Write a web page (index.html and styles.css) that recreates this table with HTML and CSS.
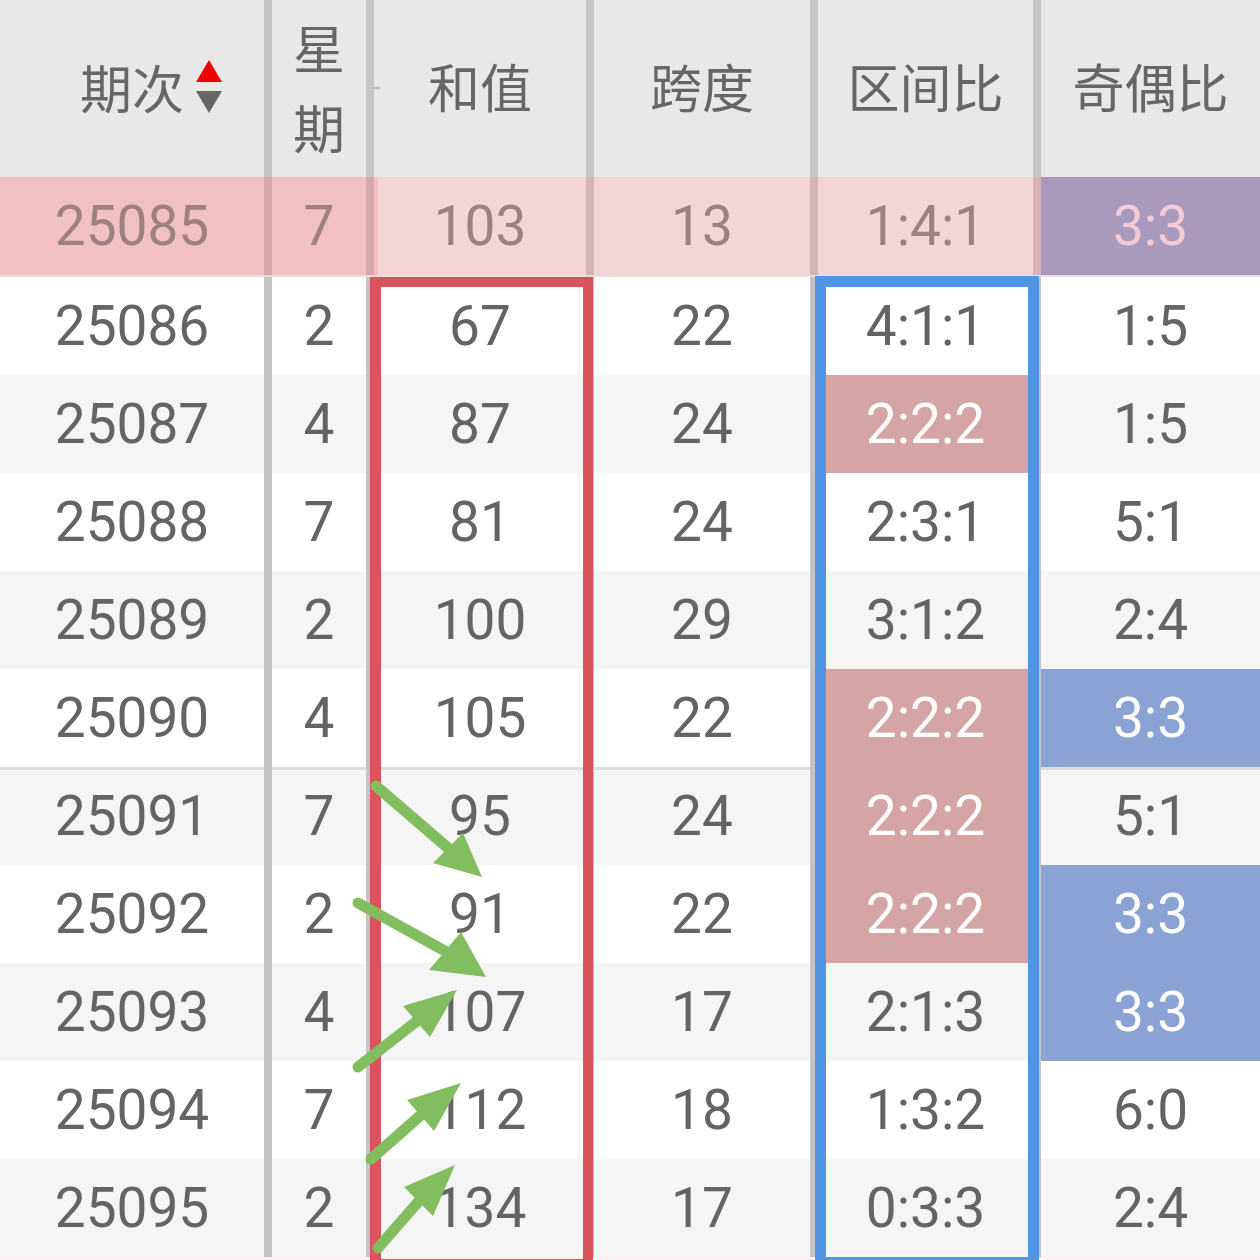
FILE: index.html
```html
<!DOCTYPE html>
<html lang="zh-CN">
<head>
<meta charset="utf-8">
<title>走势</title>
<link rel="stylesheet" href="styles.css">
</head>
<body>
<div class="board">
  <div class="row head">
    <div class="cell c1"><span class="sort-label">期次<svg class="sort" width="26" height="54" viewBox="0 0 26 54"><polygon points="13,0 26,22 0,22" fill="#f00000"/><polygon points="0,31 26,31 13,53" fill="#666"/></svg></span></div>
    <div class="cell c2 vert"><span>星</span><span>期</span></div>
    <div class="cell c3 tick">和值</div>
    <div class="cell c4">跨度</div>
    <div class="cell c5">区间比</div>
    <div class="cell c6">奇偶比</div>
  </div>
  <div class="row latest">
    <div class="cell c1">25085</div>
    <div class="cell c2">7</div>
    <div class="cell c3">103</div>
    <div class="cell c4">13</div>
    <div class="cell c5">1:4:1</div>
    <div class="cell c6">3:3</div>
  </div>
  <div class="row odd">
    <div class="cell c1">25086</div><div class="cell c2">2</div><div class="cell c3">67</div><div class="cell c4">22</div><div class="cell c5">4:1:1</div><div class="cell c6">1:5</div>
  </div>
  <div class="row even">
    <div class="cell c1">25087</div><div class="cell c2">4</div><div class="cell c3">87</div><div class="cell c4">24</div><div class="cell c5 hl-red">2:2:2</div><div class="cell c6">1:5</div>
  </div>
  <div class="row odd">
    <div class="cell c1">25088</div><div class="cell c2">7</div><div class="cell c3">81</div><div class="cell c4">24</div><div class="cell c5">2:3:1</div><div class="cell c6">5:1</div>
  </div>
  <div class="row even">
    <div class="cell c1">25089</div><div class="cell c2">2</div><div class="cell c3">100</div><div class="cell c4">29</div><div class="cell c5">3:1:2</div><div class="cell c6">2:4</div>
  </div>
  <div class="row odd">
    <div class="cell c1">25090</div><div class="cell c2">4</div><div class="cell c3">105</div><div class="cell c4">22</div><div class="cell c5 hl-red">2:2:2</div><div class="cell c6 hl-blue">3:3</div>
  </div>
  <div class="row even sep">
    <div class="cell c1">25091</div><div class="cell c2">7</div><div class="cell c3">95</div><div class="cell c4">24</div><div class="cell c5 hl-red">2:2:2</div><div class="cell c6">5:1</div>
  </div>
  <div class="row odd">
    <div class="cell c1">25092</div><div class="cell c2">2</div><div class="cell c3">91</div><div class="cell c4">22</div><div class="cell c5 hl-red">2:2:2</div><div class="cell c6 hl-blue">3:3</div>
  </div>
  <div class="row even">
    <div class="cell c1">25093</div><div class="cell c2">4</div><div class="cell c3">107</div><div class="cell c4">17</div><div class="cell c5">2:1:3</div><div class="cell c6 hl-blue">3:3</div>
  </div>
  <div class="row odd">
    <div class="cell c1">25094</div><div class="cell c2">7</div><div class="cell c3">112</div><div class="cell c4">18</div><div class="cell c5">1:3:2</div><div class="cell c6">6:0</div>
  </div>
  <div class="row even">
    <div class="cell c1">25095</div><div class="cell c2">2</div><div class="cell c3">134</div><div class="cell c4">17</div><div class="cell c5">0:3:3</div><div class="cell c6">2:4</div>
  </div>

  <div class="box box-red"></div>
  <div class="box box-blue"></div>

  <svg class="arrows" width="1260" height="1260" viewBox="0 0 1260 1260">
    <g stroke="#82be5f" stroke-width="11" stroke-linecap="round" fill="none">
      <line x1="376" y1="786" x2="448" y2="848"/>
      <line x1="358" y1="903" x2="445" y2="951"/>
      <line x1="358" y1="1067" x2="417" y2="1021"/>
      <line x1="371" y1="1159" x2="421" y2="1115"/>
      <line x1="378" y1="1248" x2="419" y2="1201"/>
    </g>
    <g fill="#82be5f">
      <polygon points="482,877 433,863 463,833"/>
      <polygon points="486,977 429,970 461,932"/>
      <polygon points="457,990 403,1006 430,1037"/>
      <polygon points="461,1083 407,1100 434,1131"/>
      <polygon points="455,1165 404,1187 433,1216"/>
    </g>
  </svg>
</div>
</body>
</html>
```

FILE: styles.css
```css
html, body {
  margin: 0;
  padding: 0;
}

body {
  width: 1260px;
  height: 1260px;
  overflow: hidden;
  background: #fcf1f0;
  font-family: Roboto, "Noto Sans CJK SC", sans-serif;
  color: #646464;
}

.board {
  position: relative;
  width: 1260px;
}

.row {
  display: grid;
  grid-template-columns: 264px 102px 220px 224px 223px 227px;
  height: 98px;
}

.cell {
  display: flex;
  align-items: center;
  justify-content: center;
  font-size: 55px;
  line-height: 1;
  border-left: 8px solid #c4c4c4;
}

.cell.c1 {
  border-left: none;
}

.odd {
  background: #ffffff;
}

.even {
  background: #f5f5f5;
}

.sep {
  box-shadow: inset 0 3px 0 #dedede;
}

/* header */
.head {
  height: 177px;
  background: #e8e8e8;
}

.head .cell {
  font-family: "Noto Sans CJK SC", sans-serif;
  font-size: 52px;
  color: #666666;
}

.sort-label {
  position: relative;
  display: inline-block;
  margin-top: -4px;
}

.sort {
  position: absolute;
  left: 100%;
  top: 50%;
  margin-left: 12px;
  margin-top: -27px;
}

.head .c3,
.head .c4,
.head .c5,
.head .c6 {
  padding-bottom: 6px;
}

.vert {
  flex-direction: column;
  line-height: 80px;
  padding-bottom: 4px;
}

.tick {
  position: relative;
}

.tick::before {
  content: "";
  position: absolute;
  left: 0;
  top: 87px;
  width: 6px;
  height: 2px;
  background: #bdbdbd;
}

/* latest (pink) row */
.latest {
  height: 100px;
  background: #f3d5d7;
  border-bottom: 2px solid #eedcdd;
  box-sizing: border-box;
  color: #9e8083;
}

.latest .cell {
  border-left-color: #d7b3b6;
}

.latest .c1,
.latest .c2 {
  background: #f0c0c2;
}

.latest .c2 {
  border-left-color: #d6a8ab;
}

.latest .c3 {
  border-left-color: #d6a8ab;
  box-shadow: inset 4px 0 0 #f0c0c2;
}

.latest .c6 {
  background: #a899bd;
  color: #f3cad5;
}

/* highlights */
.hl-red {
  background: #d5a5a6;
  color: #ffffff;
}

.hl-blue {
  background: #8ba2d4;
  color: #ffffff;
}

/* overlay boxes */
.box {
  position: absolute;
  box-sizing: border-box;
  pointer-events: none;
}

.box-red {
  left: 370px;
  top: 277px;
  width: 223px;
  height: 992px;
  border: 10px solid #d9545c;
  border-left-width: 11px;
}

.box-blue {
  left: 815px;
  top: 276px;
  width: 224px;
  height: 992px;
  border: 11px solid #5294e4;
}

.arrows {
  position: absolute;
  left: 0;
  top: 0;
  pointer-events: none;
}
```
